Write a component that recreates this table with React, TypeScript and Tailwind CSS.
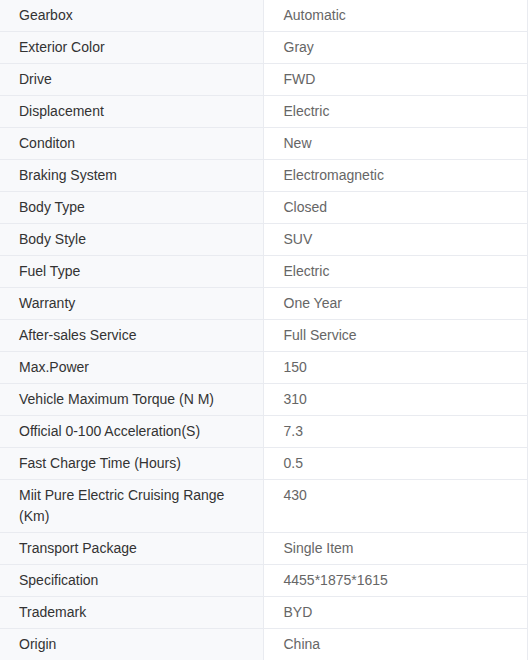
const specs: [string, string][] = [
  ["Gearbox", "Automatic"],
  ["Exterior Color", "Gray"],
  ["Drive", "FWD"],
  ["Displacement", "Electric"],
  ["Conditon", "New"],
  ["Braking System", "Electromagnetic"],
  ["Body Type", "Closed"],
  ["Body Style", "SUV"],
  ["Fuel Type", "Electric"],
  ["Warranty", "One Year"],
  ["After-sales Service", "Full Service"],
  ["Max.Power", "150"],
  ["Vehicle Maximum Torque (N M)", "310"],
  ["Official 0-100 Acceleration(S)", "7.3"],
  ["Fast Charge Time (Hours)", "0.5"],
  ["Miit Pure Electric Cruising Range (Km)", "430"],
  ["Transport Package", "Single Item"],
  ["Specification", "4455*1875*1615"],
  ["Trademark", "BYD"],
  ["Origin", "China"],
];

export default function App() {
  return (
    <div className="w-[528px] bg-white font-['Liberation_Sans',Arial,sans-serif] text-[14px] leading-[21px]">
      <table className="w-full table-fixed border-collapse">
        <tbody>
          {specs.map(([label, value]) => (
            <tr key={label}>
              <td className="w-[263px] border-r border-b border-[#e9ebf0] bg-[#f8f9fb] pl-[19px] pr-4 py-[5px] align-top text-[#333]">
                {label}
              </td>
              <td className="border-r border-b border-[#e9ebf0] bg-white pl-5 pr-4 py-[5px] align-top text-[#666]">
                {value}
              </td>
            </tr>
          ))}
        </tbody>
      </table>
    </div>
  );
}
